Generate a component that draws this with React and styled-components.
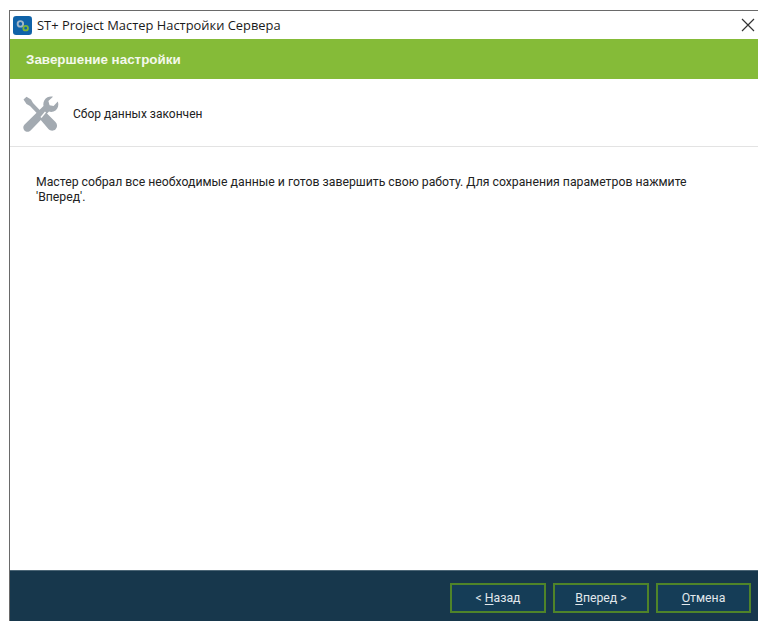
import React from "react"
import styled, { createGlobalStyle } from "styled-components"

const GlobalStyle = createGlobalStyle`
  html, body {
    margin: 0;
    padding: 0;
    background: #ffffff;
  }
  body {
    font-family: "Liberation Sans", Arial, sans-serif;
  }
`

const Page = styled.div`
  width: 758px;
  height: 621px;
  padding: 10px 0 0 9px;
  box-sizing: border-box;
  overflow: hidden;
`

const Window = styled.div`
  height: 100%;
  box-sizing: border-box;
  border-top: 1px solid #6a6a6a;
  border-left: 1px solid #6a6a6a;
  display: flex;
  flex-direction: column;
  background: #ffffff;
`

const TitleBar = styled.div`
  height: 28px;
  flex: none;
  display: flex;
  align-items: center;
  padding: 0 3px 0 3px;
  gap: 5px;
`

const TitleText = styled.span`
  flex: 1;
  font-family: "Open Sans", "Noto Sans", sans-serif;
  font-size: 12.9px;
  color: #1a1a1a;
`

const CloseButton = styled.button`
  border: 0;
  padding: 0;
  width: 14px;
  height: 14px;
  background: none;
  display: flex;
`

const Banner = styled.div`
  height: 40px;
  flex: none;
  box-sizing: border-box;
  display: flex;
  align-items: center;
  padding-left: 16px;
  background: #85bb38;
  color: #f4f8ec;
  font-size: 13.4px;
  font-weight: 700;
`

const StepHeader = styled.div`
  height: 68px;
  flex: none;
  box-sizing: border-box;
  display: flex;
  align-items: center;
  padding: 3px 0 0 12px;
  gap: 14px;
  border-bottom: 1px solid #e3e3e3;
  font-family: "Roboto", sans-serif;
  font-size: 12px;
  color: #222222;
`

const Content = styled.div`
  flex: 1;
  padding: 28px 50px 0 26px;
  font-family: "Roboto", sans-serif;
  font-size: 12.25px;
  line-height: 15px;
  color: #222222;
`

const Footer = styled.div`
  height: 51px;
  flex: none;
  box-sizing: border-box;
  display: flex;
  justify-content: flex-end;
  align-items: flex-start;
  gap: 7px;
  padding: 12px 7px 0 0;
  background: #17374c;
  border-top: 1px solid #4c6676;
`

const WizardButton = styled.button`
  width: ${({ $narrow }) => ($narrow ? 95 : 96)}px;
  height: 30px;
  padding: 0;
  box-sizing: border-box;
  border: 2px solid #4f8429;
  background: #153d57;
  color: #e2e8ec;
  font-family: "Roboto", sans-serif;
  font-size: 12.25px;
  u {
    text-underline-offset: 2px;
  }
`

// Application badge: blue rounded square with two small gears
const AppIcon = () => (
  <svg width="19" height="19" viewBox="0 0 18 18">
    <rect width="18" height="18" rx="3" fill="#0f62a8" />
    <circle cx="7" cy="7.5" r="2.6" fill="none" stroke="#9fb6c8" strokeWidth="1.8" />
    <circle cx="12" cy="11.5" r="2.2" fill="none" stroke="#7fb43a" strokeWidth="1.7" />
  </svg>
)

const CloseIcon = () => (
  <svg width="14" height="14" viewBox="0 0 14 14">
    <path d="M1 1 L13 13 M13 1 L1 13" stroke="#333333" strokeWidth="1.2" fill="none" />
  </svg>
)

// Crossed screwdriver and wrench
const ToolsIcon = () => (
  <svg width="37" height="37" viewBox="0 0 37 37">
    <g fill="#a3aab1">
      <path d="M1.5 3.5 L4.5 0.8 L9 3.5 L11 7 L22 18.5 L19 21.5 L8 10 L4.5 8 Z" />
      <path d="M20 19.5 L23.5 16 L33.5 26 C35.6 28.2 35.6 31.2 33.6 33.2 C31.6 35.2 28.4 35.1 26.4 33 L17.5 22.5 Z" />
      <path d="M35.8 5.5 C37.3 9.5 35.6 14.2 31.5 15.6 C29.8 16.2 28.4 16.1 27 15.6 L8.6 34.5 C6.8 36.3 4 36.2 2.4 34.4 C0.8 32.6 1 30 2.6 28.4 L21.5 10 C20.8 6.5 22.3 3 25.5 1.3 C27.2 0.4 29.3 0.2 31 0.7 L26.4 5 L27.6 9.2 L31.6 10 Z" />
    </g>
    <path d="M19 21.5 L23.5 16" stroke="#ffffff" strokeWidth="1.4" />
  </svg>
)

const App = () => (
  <>
    <GlobalStyle />
    <Page>
      <Window>
        <TitleBar>
          <AppIcon />
          <TitleText>ST+ Project Мастер Настройки Сервера</TitleText>
          <CloseButton aria-label="Закрыть">
            <CloseIcon />
          </CloseButton>
        </TitleBar>
        <Banner>Завершение настройки</Banner>
        <StepHeader>
          <ToolsIcon />
          <span>Сбор данных закончен</span>
        </StepHeader>
        <Content>
          Мастер собрал все необходимые данные и готов завершить свою работу. Для сохранения параметров нажмите
          'Вперед'.
        </Content>
        <Footer>
          <WizardButton>
            &lt; <u>Н</u>азад
          </WizardButton>
          <WizardButton>
            <u>В</u>перед &gt;
          </WizardButton>
          <WizardButton $narrow>
            <u>О</u>тмена
          </WizardButton>
        </Footer>
      </Window>
    </Page>
  </>
)

export default App
